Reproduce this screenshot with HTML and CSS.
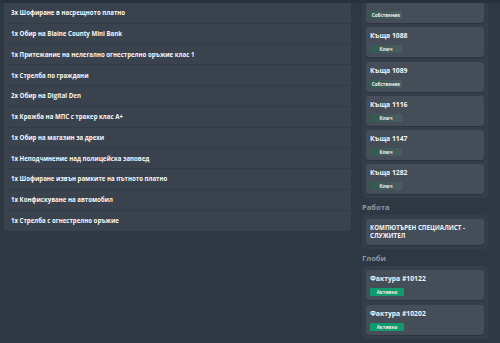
FILE: index.html
```html
<!DOCTYPE html>
<html lang="bg">
<head>
    <meta charset="UTF-8">
    <meta name="viewport" content="width=device-width, initial-scale=1.0">
    <title>Досие</title>
    <link rel="stylesheet" href="styles.css">
</head>
<body>
    <div class="topbar"></div>
    <main class="page">
        <!-- Присъди -->
        <section class="charges">
            <div class="charge">3x Шофиране в насрещното платно</div>
            <div class="charge">1x Обир на Blaine County Mini Bank</div>
            <div class="charge">1x Притежание на нелегално огнестрелно оръжие клас 1</div>
            <div class="charge">1x Стрелба по граждани</div>
            <div class="charge">2x Обир на Digital Den</div>
            <div class="charge">1x Кражба на МПС с тракер клас A+</div>
            <div class="charge">1x Обир на магазин за дрехи</div>
            <div class="charge">1x Неподчинение над полицейска заповед</div>
            <div class="charge">1x Шофиране извън рамките на пътното платно</div>
            <div class="charge">1x Конфискуване на автомобил</div>
            <div class="charge">1x Стрелба с огнестрелно оръжие</div>
        </section>

        <aside class="sidebar">
            <div class="box houses">
                <div class="card card-first">
                    <div class="card-title">Къща 1024</div>
                    <span class="tag">Собственик</span>
                </div>
                <div class="card">
                    <div class="card-title">Къща 1088</div>
                    <span class="tag">Ключ</span>
                </div>
                <div class="card">
                    <div class="card-title">Къща 1089</div>
                    <span class="tag">Собственик</span>
                </div>
                <div class="card">
                    <div class="card-title">Къща 1116</div>
                    <span class="tag">Ключ</span>
                </div>
                <div class="card">
                    <div class="card-title">Къща 1147</div>
                    <span class="tag">Ключ</span>
                </div>
                <div class="card">
                    <div class="card-title">Къща 1282</div>
                    <span class="tag">Ключ</span>
                </div>
            </div>

            <h3 class="box-label">Работа</h3>
            <div class="box">
                <div class="card job">КОМПЮТЪРЕН СПЕЦИАЛИСТ - СЛУЖИТЕЛ</div>
            </div>

            <h3 class="box-label">Глоби</h3>
            <div class="box">
                <div class="card">
                    <div class="card-title">Фактура #10122</div>
                    <span class="tag tag-active">Активна</span>
                </div>
                <div class="card">
                    <div class="card-title">Фактура #10202</div>
                    <span class="tag tag-active">Активна</span>
                </div>
            </div>
        </aside>
    </main>
</body>
</html>
```

FILE: styles.css
```css
/* Основа */
body {
    margin: 0;
    background-color: #2e3843;
    font-family: "Open Sans", "DejaVu Sans", sans-serif;
    color: #f2f4f6;
    overflow: hidden;
}

.topbar {
    height: 3px;
    background-color: #29323c;
    position: relative;
    z-index: 2;
}

.page {
    display: flex;
    align-items: flex-start;
    height: 340px;
    overflow: hidden;
}

/* Присъди */
.charges {
    width: 347px;
    margin-left: 4px;
    background-color: #3a424d;
    border-radius: 0 0 4px 4px;
}

.charge {
    box-sizing: border-box;
    height: 20.75px;
    display: flex;
    align-items: center;
    padding-left: 7px;
    font-size: 6.1px;
    font-weight: 700;
    color: #f6f7f8;
    border-bottom: 1px solid #333b46;
}

.charge:last-child {
    border-bottom: none;
}

/* Странична колона */
.sidebar {
    width: 126px;
    margin-left: 11px;
    margin-top: -14px;
}

.box {
    background-color: #343d48;
    border-radius: 4px;
    padding: 4px;
}

.card {
    box-sizing: border-box;
    height: 30px;
    background-color: #454d59;
    border-radius: 3px;
    padding: 5px 4px 4px;
    margin-bottom: 4.3px;
    box-shadow: 0 1px 1px rgba(0, 0, 0, 0.15);
}

.card:last-child {
    margin-bottom: 0;
}

.card-title {
    font-size: 6.8px;
    font-weight: 700;
    line-height: 8px;
    margin-bottom: 5px;
}

/* първата карта е скрита отчасти под лентата */
.card-first .card-title {
    margin-top: -4px;
    margin-bottom: 9px;
}

.tag {
    display: block;
    width: 32px;
    height: 8px;
    line-height: 8px;
    text-align: center;
    font-size: 4.6px;
    font-weight: 700;
    color: #eef2f1;
    border-radius: 1px;
    background: linear-gradient(90deg, #345a51, #4b5b61);
}

.tag-active {
    width: 34px;
    background: #0f9a6f;
}

.box-label {
    margin: 4px 0 3px;
    font-size: 7.6px;
    line-height: 10px;
    font-weight: 700;
    color: #8c96a1;
}

.card.job {
    height: 26px;
    padding: 5px 4px;
    font-size: 6.2px;
    line-height: 8px;
    font-weight: 700;
}
```
